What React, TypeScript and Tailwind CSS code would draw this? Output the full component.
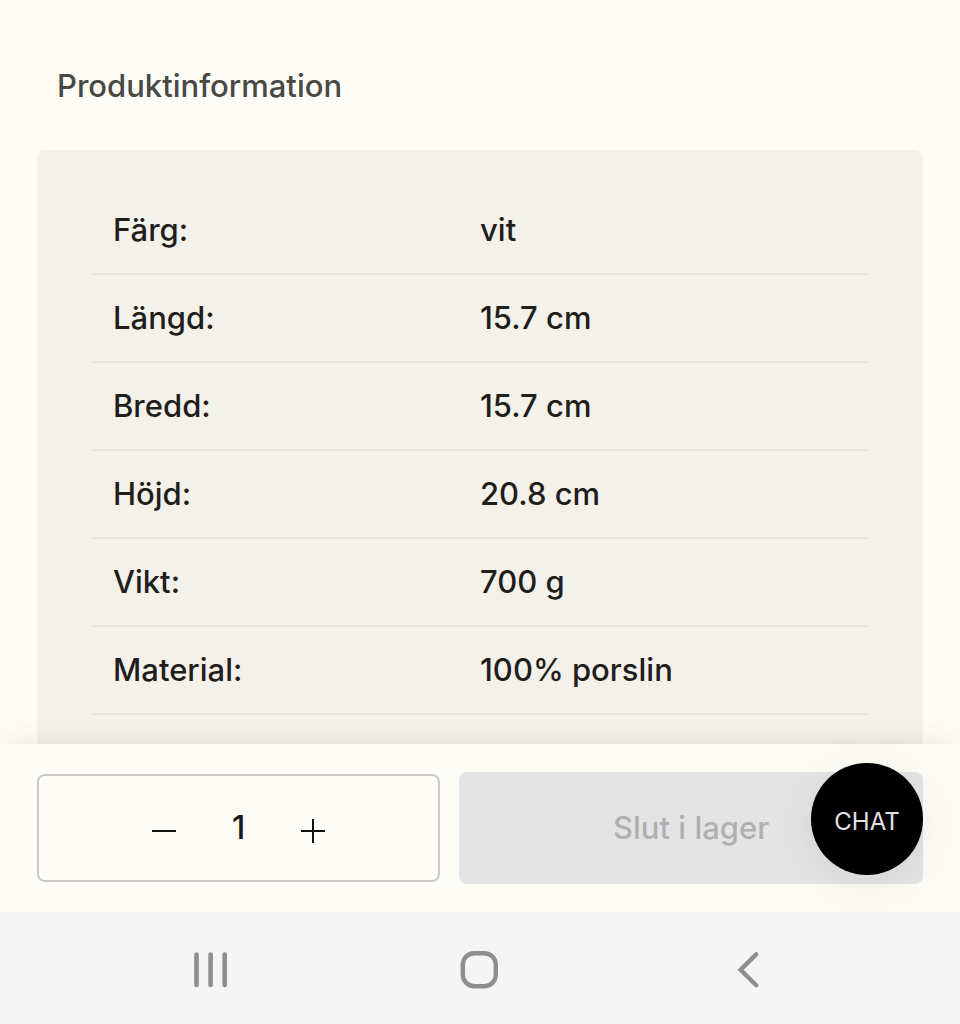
import { useState } from 'react'

type Row = {
  label: string
  value: string
}

const rows: Row[] = [
  { label: 'Färg:', value: 'vit' },
  { label: 'Längd:', value: '15.7 cm' },
  { label: 'Bredd:', value: '15.7 cm' },
  { label: 'Höjd:', value: '20.8 cm' },
  { label: 'Vikt:', value: '700 g' },
  { label: 'Material:', value: '100% porslin' },
]

function ProductInfo() {
  return (
    <section className="flex min-h-0 flex-1 flex-col overflow-hidden px-[37px] pt-[62px]">
      <h2 className="px-5 text-[31px] leading-[48px] font-[450] text-[#484844]">Produktinformation</h2>
      <div className="mt-10 flex-1 rounded-t-lg bg-[#f4f1eb] px-14 pt-9">
        <table className="w-full table-fixed border-collapse text-[31px] leading-[48px] font-[450] text-[#1f1e1b]">
          <tbody>
            {rows.map(row => (
              <tr key={row.label} className="h-[88px] border-b-2 border-[#e6e4e5]">
                <th scope="row" className="pl-5 text-left font-[450]">{row.label}</th>
                <td>{row.value}</td>
              </tr>
            ))}
          </tbody>
        </table>
      </div>
    </section>
  )
}

function QuantityPicker() {
  const [quantity, setQuantity] = useState(1)

  return (
    <div className="flex h-[108px] items-center justify-center rounded-lg border-2 border-[#cbcac6]">
      <button
        type="button"
        aria-label="Minska antal"
        className="flex h-16 w-12 items-center justify-center pt-1.5"
        onClick={() => setQuantity(q => Math.max(1, q - 1))}
      >
        <svg width="24" height="24" viewBox="0 0 24 24" stroke="#11110f" strokeWidth="2">
          <path d="M0 12h24" />
        </svg>
      </button>
      <input
        type="text"
        inputMode="numeric"
        aria-label="Antal"
        className="w-[101px] bg-transparent text-center text-[32px] leading-[48px] font-[450] text-[#1a1a18] outline-none"
        value={quantity}
        onChange={e => setQuantity(parseInt(e.target.value) || 1)}
      />
      <button
        type="button"
        aria-label="Öka antal"
        className="flex h-16 w-12 items-center justify-center pt-1.5"
        onClick={() => setQuantity(q => q + 1)}
      >
        <svg width="24" height="24" viewBox="0 0 24 24" stroke="#11110f" strokeWidth="2">
          <path d="M0 12h24M12 0v24" />
        </svg>
      </button>
    </div>
  )
}

function BuyBar() {
  return (
    <div className="relative grid grid-cols-[20fr_23fr] items-center gap-[19px] bg-[#fdfcf7] px-[37px] py-7 shadow-[0_-4px_28px_-8px_rgba(60,50,30,0.16)]">
      <QuantityPicker />
      <button type="button" disabled className="h-28 rounded-lg bg-[#e4e4e4] text-[31px] leading-[48px] font-[450] text-[#b0b0b0]">
        Slut i lager
      </button>
      {/* Floating chat bubble */}
      <button
        type="button"
        className="absolute right-[37px] bottom-[37px] size-28 rounded-full bg-black pt-1.5 text-2xl text-[#e2e2e2] shadow-[0_8px_48px_rgba(0,0,0,0.08)]"
      >
        CHAT
      </button>
    </div>
  )
}

function SystemNav() {
  return (
    <nav className="relative flex h-28 items-center justify-around bg-[#f5f5f5] px-[75px] pt-1 text-[#8e8e8e]">
      <button type="button" aria-label="Senaste appar" className="p-4">
        <svg width="40" height="40" viewBox="0 0 40 40" fill="none" stroke="currentColor" strokeWidth="4.6" strokeLinecap="round">
          <path d="M6.5 4.6v30.4M20.6 4.6v30.4M34.7 4.6v30.4" />
        </svg>
      </button>
      <button type="button" aria-label="Hem" className="p-4">
        <svg width="40" height="40" viewBox="0 0 40 40" fill="none" stroke="currentColor" strokeWidth="4.4">
          <rect x="2.8" y="3.2" width="33" height="33" rx="11.5" />
        </svg>
      </button>
      <button type="button" aria-label="Tillbaka" className="p-4">
        <svg width="40" height="40" viewBox="0 0 40 40" fill="none" stroke="currentColor" strokeWidth="4.4" strokeLinecap="round">
          <path d="M26.2 4.4L10.6 19.8L26.2 35.2" />
        </svg>
      </button>
    </nav>
  )
}

export default function App() {
  return (
    <main className="flex h-screen flex-col bg-[#fdfcf7] font-['Inter',sans-serif]">
      <ProductInfo />
      <BuyBar />
      <SystemNav />
    </main>
  )
}
